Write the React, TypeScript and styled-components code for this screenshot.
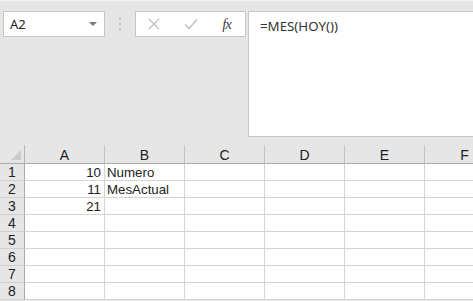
import React from "react";
import styled, { createGlobalStyle } from "styled-components";

const Global = createGlobalStyle`
  html, body { margin: 0; padding: 0; background: #e6e6e6; }
  #root { width: 473px; height: 301px; overflow: hidden; }
`;

const Page = styled.div`
  width: 473px;
  height: 301px;
  background: #e6e6e6;
  overflow: hidden;
  border-top: 1px solid #f2f2f2;
  box-sizing: border-box;
`;

const TopArea = styled.div`
  display: flex;
  align-items: flex-start;
  height: 144px;
  padding-top: 10px;
  padding-left: 3px;
  box-sizing: border-box;
`;

const NameBox = styled.div`
  width: 102px;
  height: 26px;
  box-sizing: border-box;
  background: #fff;
  border: 1px solid #c6c6c6;
  display: flex;
  align-items: center;
  justify-content: space-between;
  padding: 0 7px 0 6px;
  font-family: "Noto Sans", "Open Sans", sans-serif;
  font-size: 13px;
  color: #222;
`;

const Caret = styled.span`
  width: 0;
  height: 0;
  border-left: 4px solid transparent;
  border-right: 4px solid transparent;
  border-top: 4px solid #777;
`;

const Grip = styled.div`
  width: 30px;
  height: 26px;
  display: flex;
  flex-direction: column;
  align-items: center;
  justify-content: center;
  gap: 3px;
`;

const Dot = styled.span`
  width: 2px;
  height: 2px;
  background: #bdbdbd;
`;

const FxBar = styled.div`
  width: 111px;
  height: 26px;
  box-sizing: border-box;
  background: #fff;
  border: 1px solid #c6c6c6;
  display: flex;
  align-items: center;
  justify-content: space-between;
  padding: 0 14px 0 12px;
`;

const Fx = styled.span`
  font-family: "Liberation Serif", "DejaVu Serif", serif;
  font-style: italic;
  font-size: 15px;
  color: #444;
  letter-spacing: -1px;
  line-height: 1;
`;

const FormulaBox = styled.div`
  flex: 1;
  margin-left: 2px;
  margin-right: -2px;
  height: 126px;
  box-sizing: border-box;
  background: #fff;
  border: 1px solid #c6c6c6;
  padding: 5px 0 0 11px;
  font-family: "Noto Sans", "Open Sans", sans-serif;
  font-size: 13.3px;
  color: #333;
`;

const Grid = styled.div`
  display: grid;
  grid-template-columns: 25px repeat(6, 80px);
  grid-auto-rows: 17px;
  grid-template-rows: 19px;
  font-family: "Liberation Sans", Arial, sans-serif;
`;

const Corner = styled.div`
  position: relative;
  border-right: 1px solid #b5b5b5;
  border-bottom: 1px solid #ababab;
  box-sizing: border-box;
  &::after {
    content: "";
    position: absolute;
    right: 3px;
    bottom: 3px;
    width: 0;
    height: 0;
    border-left: 10px solid transparent;
    border-bottom: 10px solid #cbcbcb;
  }
`;

const ColHead = styled.div`
  box-sizing: border-box;
  border-bottom: 1px solid #ababab;
  border-right: 1px solid #c3c3c3;
  display: flex;
  align-items: center;
  justify-content: center;
  font-size: 14px;
  color: #222;
  padding-top: 2px;
`;

const RowHead = styled.div`
  box-sizing: border-box;
  border-right: 1px solid #ababab;
  border-bottom: 1px solid #cfcfcf;
  background: #e6e6e6;
  display: flex;
  align-items: center;
  justify-content: center;
  font-size: 14px;
  color: #222;
`;

const Cell = styled.div<{ $num?: boolean }>`
  box-sizing: border-box;
  background: #fff;
  border-right: 1px solid #d4d4d4;
  border-bottom: 1px solid #d4d4d4;
  display: flex;
  align-items: center;
  justify-content: ${(p) => (p.$num ? "flex-end" : "flex-start")};
  padding: 0 3px 0 2px;
  font-size: 13.3px;
  color: #222;
  white-space: nowrap;
  overflow: visible;
`;

const cols = ["A", "B", "C", "D", "E", "F"];
const data: Record<number, (string | number)[]> = {
  1: [10, "Numero"],
  2: [11, "MesActual"],
  3: [21],
};

const XIcon = () => (
  <svg width="12" height="12" viewBox="0 0 12 12">
    <path d="M1 1 L11 11 M11 1 L1 11" stroke="#bcbcbc" strokeWidth="1.3" fill="none" />
  </svg>
);

const CheckIcon = () => (
  <svg width="14" height="12" viewBox="0 0 14 12">
    <path d="M1 6.5 L5 10.5 L13 1.5" stroke="#bcbcbc" strokeWidth="1.4" fill="none" />
  </svg>
);

export default function App() {
  return (
    <>
      <Global />
      <Page>
        <TopArea>
          <NameBox>
            <span>A2</span>
            <Caret />
          </NameBox>
          <Grip>
            <Dot />
            <Dot />
            <Dot />
          </Grip>
          <FxBar>
            <XIcon />
            <CheckIcon />
            <Fx>fx</Fx>
          </FxBar>
          <FormulaBox>=MES(HOY())</FormulaBox>
        </TopArea>
        <Grid>
          <Corner />
          {cols.map((c) => (
            <ColHead key={c}>{c}</ColHead>
          ))}
          {[1, 2, 3, 4, 5, 6, 7, 8].map((r) => (
            <React.Fragment key={r}>
              <RowHead>{r}</RowHead>
              {cols.map((c, i) => {
                const v = data[r]?.[i];
                return (
                  <Cell key={c} $num={typeof v === "number"}>
                    {v ?? ""}
                  </Cell>
                );
              })}
            </React.Fragment>
          ))}
        </Grid>
      </Page>
    </>
  );
}
